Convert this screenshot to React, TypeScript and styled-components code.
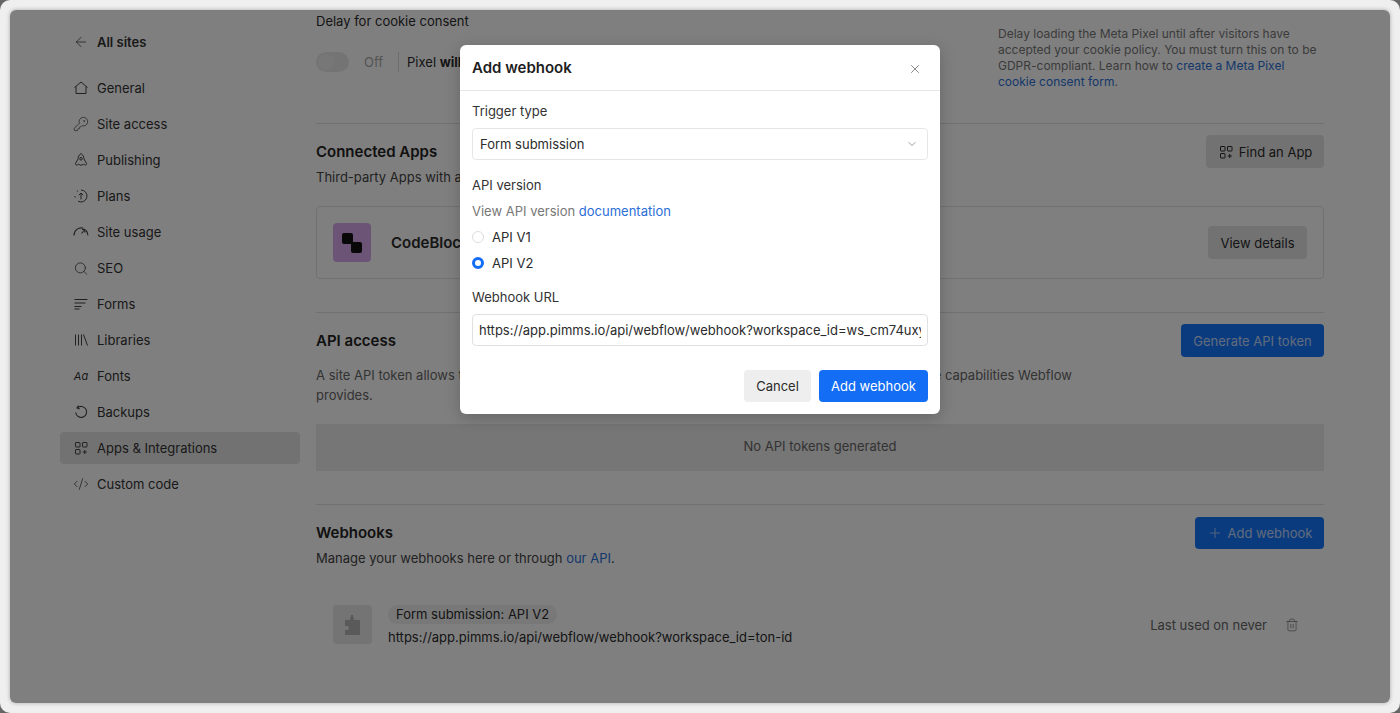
import React from 'react';
import styled, { createGlobalStyle } from 'styled-components';
import { ArrowLeft, ChevronDown, KeyRound, Plus, Search, Trash2, X, CodeXml } from 'lucide-react';

const GlobalStyle = createGlobalStyle`
  * { box-sizing: border-box; }
  html, body { margin: 0; padding: 0; background: #666; }
  body {
    font-family: Inter, "Liberation Sans", sans-serif;
    font-size: 13px;
    line-height: 20px;
    color: #2b2b2b;
    overflow: hidden;
  }
`;

const Shell = styled.div`
  width: 1400px;
  height: 713px;
  padding: 10px;
  background: #efefef;
  border-radius: 10px;
`;

const Window = styled.div`
  position: relative;
  display: flex;
  height: 693px;
  background: #fff;
  border-radius: 6px;
  box-shadow: 0 0 4px rgba(0, 0, 0, 0.3);
  overflow: hidden;
`;

const Sidebar = styled.nav`
  flex: 0 0 290px;
  padding: 16px 0 0 50px;
`;

const NavItem = styled.div<{ $active?: boolean; $back?: boolean }>`
  display: flex;
  align-items: center;
  gap: 8px;
  height: 32px;
  margin-bottom: ${({ $back }) => ($back ? '14px' : '4px')};
  padding-left: 13px;
  border-radius: 4px;
  font-weight: ${({ $back }) => ($back ? 600 : 400)};
  background: ${({ $active }) => ($active ? '#e4e4e4' : 'transparent')};
  color: #333;

  svg { flex: 0 0 16px; color: #444; }
`;

const FontIcon = styled.span`
  flex: 0 0 16px;
  font-size: 11px;
  font-style: italic;
  text-align: center;
`;

const Main = styled.main`
  flex: 0 0 1008px;
  margin-left: 16px;
  padding-top: 1px;
`;

const Section = styled.section<{ $last?: boolean }>`
  padding-bottom: ${({ $last }) => ($last ? '0' : '33px')};
  border-bottom: ${({ $last }) => ($last ? 'none' : '1px solid #e3e3e3')};
`;

const CookieRow = styled.div`
  display: flex;
  justify-content: space-between;
`;

const ToggleRow = styled.div`
  display: flex;
  align-items: center;
  margin-top: 21px;
  height: 20px;
`;

const Toggle = styled.span`
  position: relative;
  display: block;
  width: 33px;
  height: 20px;
  border-radius: 10px;
  background: #e8e8e8;

  &::after {
    content: '';
    position: absolute;
    top: 2px;
    left: 2px;
    width: 16px;
    height: 16px;
    border-radius: 50%;
    background: #eeeeee;
  }
`;

const OffLabel = styled.span`
  margin-left: 15px;
  color: #a8a8a8;
`;

const ToggleDivider = styled.span`
  width: 1px;
  height: 20px;
  margin: 0 8px 0 15px;
  background: #dcdcdc;
`;

const CookieHelp = styled.p`
  width: 326px;
  margin: 15px 0 0;
  font-size: 12px;
  line-height: 16px;
  color: #777;
`;

const Link = styled.a`
  color: #2a6fd6;
`;

const SectionHeader = styled.div`
  display: flex;
  justify-content: space-between;
  align-items: flex-start;
`;

const TitleBlock = styled.div`
  padding-top: 18px;
`;

const SectionTitle = styled.h2`
  margin: 0;
  font-size: 15px;
  line-height: 20px;
  font-weight: 600;
  color: #222;
`;

const SectionSub = styled.p`
  margin: 5px 0 0;
  color: #444;
`;

type ButtonVariant = 'primary' | 'muted' | 'modalPrimary' | 'modalMuted';

const BUTTON_BG: Record<ButtonVariant, string> = {
  primary: '#1577ff',
  muted: '#e4e4e4',
  modalPrimary: '#146ef5',
  modalMuted: '#eeeeee',
};

const BUTTON_FG: Record<ButtonVariant, string> = {
  primary: '#c4d8f8',
  muted: '#2b2b2b',
  modalPrimary: '#fff',
  modalMuted: '#2b2b2b',
};

const Button = styled.button<{ $variant: ButtonVariant; $top?: number; $width: number; $height?: number }>`
  display: inline-flex;
  align-items: center;
  justify-content: center;
  gap: 5px;
  flex: 0 0 auto;
  width: ${({ $width }) => $width}px;
  height: ${({ $height }) => $height ?? 33}px;
  margin-top: ${({ $top }) => $top ?? 0}px;
  border: none;
  border-radius: 4px;
  font: inherit;
  color: ${({ $variant }) => BUTTON_FG[$variant]};
  background: ${({ $variant }) => BUTTON_BG[$variant]};
`;

const AppCard = styled.div`
  display: flex;
  align-items: center;
  justify-content: space-between;
  height: 73px;
  margin-top: 19px;
  padding: 0 16px;
  border: 1px solid #e3e3e3;
  border-radius: 4px;
`;

const AppInfo = styled.div`
  display: flex;
  align-items: center;
  gap: 20px;
`;

const AppIcon = styled.div`
  display: flex;
  align-items: center;
  justify-content: center;
  width: 38px;
  height: 39px;
  border-radius: 4px;
  background: #d9a9ec;
`;

const AppName = styled.span`
  font-size: 15px;
  font-weight: 600;
`;

const ApiDesc = styled.p`
  max-width: 770px;
  margin: 8px 0 0;
  color: #666;
`;

const EmptyBox = styled.div`
  display: flex;
  align-items: center;
  justify-content: center;
  height: 47px;
  margin-top: 19px;
  padding-bottom: 3px;
  border: 1px solid #eaeaea;
  background: #ececec;
  color: #666;
`;

const HookRow = styled.div`
  display: flex;
  justify-content: space-between;
  margin-top: 37px;
  padding: 0 25px 0 17px;
`;

const HookInfo = styled.div`
  display: flex;
  gap: 16px;
`;

const HookIcon = styled.div`
  display: flex;
  align-items: center;
  justify-content: center;
  width: 39px;
  height: 39px;
  border-radius: 4px;
  background: #e8e8e8;
  color: #b4b4b4;
`;

const HookTag = styled.div`
  width: fit-content;
  height: 19px;
  padding: 0 8px;
  border-radius: 9px;
  line-height: 19px;
  background: #f0f0f0;
`;

const HookUrl = styled.div`
  margin-top: 3px;
`;

const HookMeta = styled.div`
  display: flex;
  align-items: center;
  gap: 18px;
  height: 40px;
  color: #666;

  svg { color: #666; }
`;

const Overlay = styled.div`
  position: absolute;
  inset: 0;
  display: flex;
  justify-content: center;
  align-items: flex-start;
  padding-top: 35px;
  background: rgba(0, 0, 0, 0.5);
`;

const Modal = styled.div`
  width: 480px;
  height: 369px;
  background: #fff;
  border-radius: 6px;
  box-shadow: 0 4px 16px rgba(0, 0, 0, 0.2);
`;

const ModalHeader = styled.div`
  display: flex;
  align-items: center;
  justify-content: space-between;
  height: 46px;
  padding: 0 18px 0 12px;
  border-bottom: 1px solid #e6e6e6;
`;

const ModalTitle = styled.h3`
  margin: 0;
  font-size: 15px;
  font-weight: 600;
  color: #1e1e1e;
`;

const CloseIcon = styled(X)`
  margin-top: 2px;
  color: #555;
`;

const ModalBody = styled.div`
  padding: 10px 12px 0;
`;

const FieldLabel = styled.div<{ $top?: number }>`
  margin-top: ${({ $top }) => $top ?? 0}px;
  color: #333;
`;

const SelectBox = styled.div`
  display: flex;
  align-items: center;
  justify-content: space-between;
  height: 32px;
  margin-top: 7px;
  padding: 0 9px 0 7px;
  border: 1px solid #e6e6e6;
  border-radius: 4px;

  svg { color: #555; }
`;

const HelpText = styled.div`
  margin-top: 6px;
  color: #777;
`;

const RadioRow = styled.div`
  display: flex;
  align-items: center;
  gap: 8px;
  height: 20px;
  margin-top: 6px;
`;

const Radio = styled.span<{ $checked?: boolean }>`
  flex: 0 0 12px;
  height: 12px;
  border-radius: 50%;
  background: #fff;
  border: ${({ $checked }) => ($checked ? '3.5px solid #146ef5' : '1px solid #dddddd')};
`;

const UrlField = styled.div`
  height: 32px;
  margin-top: 7px;
  padding: 0 6px;
  border: 1px solid #e0e0e0;
  border-radius: 4px;
  line-height: 30px;
`;

const UrlText = styled.div`
  white-space: nowrap;
  overflow: hidden;
`;

const ModalFooter = styled.div`
  display: flex;
  justify-content: flex-end;
  gap: 8px;
  margin-top: 24px;
`;

const HomeIcon = () => (
  <svg width="16" height="16" viewBox="0 0 16 16" fill="none" stroke="currentColor" strokeWidth="1">
    <path d="M1.500 7.500 8 2l6.500 5.500M3 6.500v7h10v-7" strokeLinejoin="round" />
  </svg>
);

const AppsIcon = () => (
  <svg width="16" height="16" viewBox="0 0 16 16" fill="none" stroke="currentColor" strokeWidth="1">
    <rect x="2.500" y="2.500" width="4.500" height="4.500" rx="0.500" />
    <rect x="9.500" y="2.500" width="4.500" height="4.500" rx="0.500" />
    <rect x="2.500" y="9.500" width="4.500" height="4.500" rx="0.500" />
    <path d="M11.750 10v4M9.750 12h4" />
  </svg>
);

const RocketIcon = () => (
  <svg width="16" height="16" viewBox="0 0 16 16" fill="none" stroke="currentColor" strokeWidth="1">
    <path d="M8 1.500c2 1.300 3 3.400 3 5.600l2.500 4.300c.4.800-.2 1.600-1 1.700-.9.100-1.400-.8-2.200-.8s-1.500 1-2.300 1-1.500-1-2.300-1-1.300.9-2.200.8c-.8-.1-1.400-.9-1-1.700L5 7.100c0-2.200 1-4.300 3-5.600z" />
    <circle cx="8" cy="6.800" r="1.300" />
  </svg>
);

const PlansIcon = () => (
  <svg width="16" height="16" viewBox="0 0 16 16" fill="none" stroke="currentColor" strokeWidth="1">
    <path d="M8 2a6 6 0 1 1-3 11.200" />
    <path d="M2.200 9.500a6 6 0 0 1 0-3M3.800 3.700A6 6 0 0 1 5.500 2.500" strokeDasharray="1.500 1.500" />
    <path d="M8 11.500V5M5.800 7.200 8 5l2.200 2.200" />
  </svg>
);

const UsageIcon = () => (
  <svg width="16" height="16" viewBox="0 0 16 16" fill="none" stroke="currentColor" strokeWidth="1.100">
    <path d="M1 11.500A7.200 7.200 0 0 1 10.500 4.300" />
    <path d="M13 6.500a7.200 7.200 0 0 1 2 5" />
    <path d="M8.500 9.500 12 5.500M9 5.500h3v3" />
  </svg>
);

const FormsIcon = () => (
  <svg width="16" height="16" viewBox="0 0 16 16" fill="none" stroke="currentColor" strokeWidth="1.200">
    <path d="M1.500 3.500h13M1.500 7h11M1.500 10.500h7M1.500 13h5" />
  </svg>
);

const LibraryIcon = () => (
  <svg width="16" height="16" viewBox="0 0 16 16" fill="none" stroke="currentColor" strokeWidth="1">
    <path d="M2.500 2.500v11M5.500 2.500v11M8.500 2.500v11M10.500 2.500l4 11" />
  </svg>
);

const BackupIcon = () => (
  <svg width="16" height="16" viewBox="0 0 16 16" fill="none" stroke="currentColor" strokeWidth="1.100">
    <path d="M5.500 1.500 4 4l2.800 1" />
    <path d="M4.300 4a5.500 5.500 0 1 1-1.600 4.500" />
  </svg>
);

const PuzzleIcon = () => (
  <svg width="18" height="22" viewBox="0 0 18 22" fill="currentColor">
    <path d="M1 6h5V4.500a1.500 1.500 0 0 1 1-1.400V1h2v2.100a1.500 1.500 0 0 1 1 1.400V6h6v15H1v-5h2a2 2 0 0 0 0-4H1z" />
  </svg>
);

const CodeBlocksIcon = () => (
  <svg width="24" height="24" viewBox="0 0 24 24" fill="#111">
    <rect x="2" y="2" width="11" height="11" rx="2" />
    <rect x="11" y="11" width="11" height="11" rx="2" />
  </svg>
);

const NAV_ITEMS: { label: string; icon: React.ReactNode; active?: boolean }[] = [
  { label: 'General', icon: <HomeIcon /> },
  { label: 'Site access', icon: <KeyRound size={16} strokeWidth={1.1} /> },
  { label: 'Publishing', icon: <RocketIcon /> },
  { label: 'Plans', icon: <PlansIcon /> },
  { label: 'Site usage', icon: <UsageIcon /> },
  { label: 'SEO', icon: <Search size={15} strokeWidth={1.3} /> },
  { label: 'Forms', icon: <FormsIcon /> },
  { label: 'Libraries', icon: <LibraryIcon /> },
  { label: 'Fonts', icon: <FontIcon>Aa</FontIcon> },
  { label: 'Backups', icon: <BackupIcon /> },
  { label: 'Apps & Integrations', icon: <AppsIcon />, active: true },
  { label: 'Custom code', icon: <CodeXml size={16} strokeWidth={1.2} /> },
];

const WEBHOOK_URL = 'https://app.pimms.io/api/webflow/webhook?workspace_id=';

export default function App() {
  return (
    <Shell>
      <GlobalStyle />
      <Window>
        <Sidebar>
          <NavItem $back>
            <ArrowLeft size={16} strokeWidth={1.2} />
            All sites
          </NavItem>
          {NAV_ITEMS.map((item) => (
            <NavItem key={item.label} $active={item.active}>
              {item.icon}
              {item.label}
            </NavItem>
          ))}
        </Sidebar>

        <Main>
          <Section>
            <CookieRow>
              <div>
                <div>Delay for cookie consent</div>
                <ToggleRow>
                  <Toggle />
                  <OffLabel>Off</OffLabel>
                  <ToggleDivider />
                  <span>
                    Pixel <b>will</b> load before consent
                  </span>
                </ToggleRow>
              </div>
              <CookieHelp>
                Delay loading the Meta Pixel until after visitors have accepted your cookie policy. You must turn this on to be GDPR-compliant. Learn how to{' '}
                <Link>create a Meta Pixel cookie consent form</Link>.
              </CookieHelp>
            </CookieRow>
          </Section>

          <Section>
            <SectionHeader>
              <TitleBlock>
                <SectionTitle>Connected Apps</SectionTitle>
                <SectionSub>Third-party Apps with access to this site</SectionSub>
              </TitleBlock>
              <Button $variant="muted" $top={11} $width={118}>
                <AppsIcon />
                Find an App
              </Button>
            </SectionHeader>
            <AppCard>
              <AppInfo>
                <AppIcon>
                  <CodeBlocksIcon />
                </AppIcon>
                <AppName>CodeBlocks</AppName>
              </AppInfo>
              <Button $variant="muted" $width={99}>
                View details
              </Button>
            </AppCard>
          </Section>

          <Section>
            <SectionHeader>
              <TitleBlock>
                <SectionTitle>API access</SectionTitle>
              </TitleBlock>
              <Button $variant="primary" $top={11} $width={143}>
                Generate API token
              </Button>
            </SectionHeader>
            <ApiDesc>
              A site API token allows third-party apps to read and modify all the data on this site, extending the core capabilities Webflow provides.
            </ApiDesc>
            <EmptyBox>No API tokens generated</EmptyBox>
          </Section>

          <Section $last>
            <SectionHeader>
              <TitleBlock>
                <SectionTitle>Webhooks</SectionTitle>
                <SectionSub>
                  Manage your webhooks here or through <Link>our API</Link>.
                </SectionSub>
              </TitleBlock>
              <Button $variant="primary" $top={12} $width={129} $height={32}>
                <Plus size={16} strokeWidth={1.2} />
                Add webhook
              </Button>
            </SectionHeader>
            <HookRow>
              <HookInfo>
                <HookIcon>
                  <PuzzleIcon />
                </HookIcon>
                <div>
                  <HookTag>Form submission: API V2</HookTag>
                  <HookUrl>{WEBHOOK_URL}ton-id</HookUrl>
                </div>
              </HookInfo>
              <HookMeta>
                Last used on never
                <Trash2 size={14} strokeWidth={1.1} />
              </HookMeta>
            </HookRow>
          </Section>
        </Main>

        <Overlay>
          <Modal>
            <ModalHeader>
              <ModalTitle>Add webhook</ModalTitle>
              <CloseIcon size={14} strokeWidth={1.2} />
            </ModalHeader>
            <ModalBody>
              <FieldLabel>Trigger type</FieldLabel>
              <SelectBox>
                Form submission
                <ChevronDown size={12} strokeWidth={1.2} />
              </SelectBox>
              <FieldLabel $top={15}>API version</FieldLabel>
              <HelpText>
                View API version <Link>documentation</Link>
              </HelpText>
              <RadioRow>
                <Radio />
                API V1
              </RadioRow>
              <RadioRow>
                <Radio $checked />
                API V2
              </RadioRow>
              <FieldLabel $top={14}>Webhook URL</FieldLabel>
              <UrlField>
                <UrlText>{WEBHOOK_URL}ws_cm74uxyz12ab</UrlText>
              </UrlField>
              <ModalFooter>
                <Button $variant="modalMuted" $width={67} $height={32}>
                  Cancel
                </Button>
                <Button $variant="modalPrimary" $width={109} $height={32}>
                  Add webhook
                </Button>
              </ModalFooter>
            </ModalBody>
          </Modal>
        </Overlay>
      </Window>
    </Shell>
  );
}
